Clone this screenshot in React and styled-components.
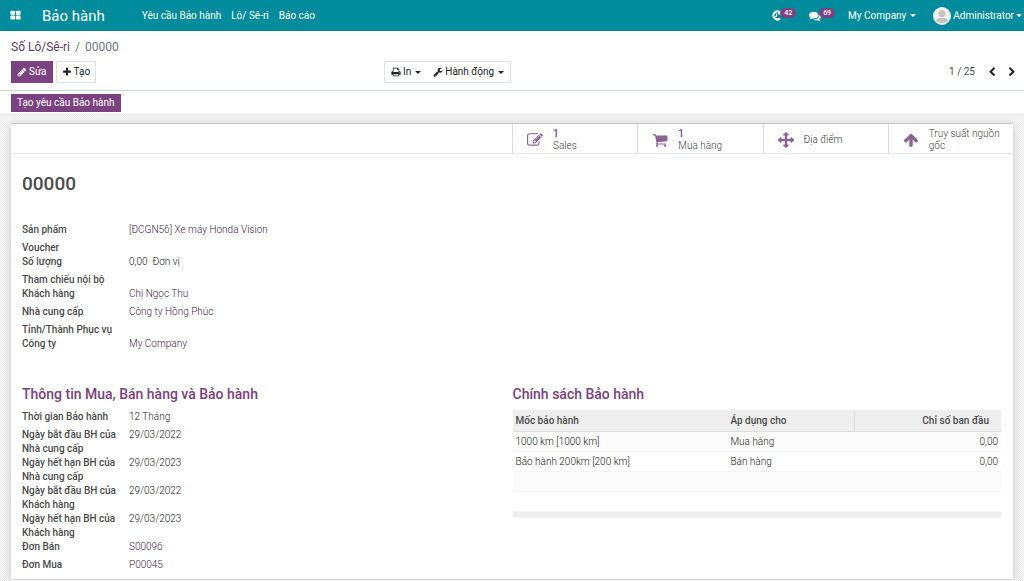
import React from "react";
import styled, { createGlobalStyle } from "styled-components";


const GlobalStyle = createGlobalStyle`
* {
  box-sizing: border-box;
}

body {
  margin: 0;
  font-family: Roboto, "Noto Sans", sans-serif;
  font-size: 10px;
  line-height: 14px;
  color: #4c4c4c;
  background-color: #eeeeee;
  background-image: conic-gradient(#f8f8f8 25%, #ececec 0 50%, #f8f8f8 0 75%, #ececec 0);
  background-size: 2px 2px;
}

a {
  color: #5f3a66;
  text-decoration: none;
}

button {
  font: inherit;
  cursor: pointer;
}
`

const paths = {
  grid: "M832 1024v384q0 52-38 90t-90 38h-512q-52 0-90-38t-38-90v-384q0-52 38-90t90-38h512q52 0 90 38t38 90zm0-768v384q0 52-38 90t-90 38h-512q-52 0-90-38t-38-90v-384q0-52 38-90t90-38h512q52 0 90 38t38 90zm896 768v384q0 52-38 90t-90 38h-512q-52 0-90-38t-38-90v-384q0-52 38-90t90-38h512q52 0 90 38t38 90zm0-768v384q0 52-38 90t-90 38h-512q-52 0-90-38t-38-90v-384q0-52 38-90t90-38h512q52 0 90 38t38 90z",
  pencil: "M491 1536l91-91-235-235-91 91v107h128v128h107zm523-928q0-22-22-22-10 0-17 7l-542 542q-7 7-7 17 0 22 22 22 10 0 17-7l542-542q7-7 7-17zm-54-192l416 416-832 832h-416v-416zm683 96q0 53-37 90l-166 166-416-416 166-165q36-38 90-38 53 0 91 38l235 234q37 39 37 91z",
  plus: "M1600 736v192q0 40-28 68t-68 28h-416v416q0 40-28 68t-68 28h-192q-40 0-68-28t-28-68v-416h-416q-40 0-68-28t-28-68v-192q0-40 28-68t68-28h416v-416q0-40 28-68t68-28h192q40 0 68 28t28 68v416h416q40 0 68 28t28 68z",
  print: "M448 1536h896v-256h-896v256zm0-640h896v-384h-160q-40 0-68-28t-28-68v-160h-640v640zm1152 64q0-26-19-45t-45-19-45 19-19 45 19 45 45 19 45-19 19-45zm128 0v416q0 13-9.5 22.5t-22.5 9.5h-224v160q0 40-28 68t-68 28h-960q-40 0-68-28t-28-68v-160h-224q-13 0-22.5-9.5t-9.5-22.5v-416q0-79 56.5-135.5t135.5-56.5h64v-544q0-40 28-68t68-28h672q40 0 88 20t76 48l152 152q28 28 48 76t20 88v256h64q79 0 135.5 56.5t56.5 135.5z",
  wrench: "M448 1472q0-26-19-45t-45-19-45 19-19 45 19 45 45 19 45-19 19-45zm644-420l-682 682q-37 37-90 37-52 0-91-37l-106-108q-38-36-38-90 0-53 38-91l681-681q39 98 114.5 173.5t173.5 114.5zm634-435q0 39-23 106-47 134-164.5 217.5t-258.5 83.5q-185 0-316.5-131.5t-131.5-316.5 131.5-316.5 316.5-131.5q58 0 121.5 16.5t107.5 46.5q16 11 16 28t-16 28l-293 169v224l193 107q5-3 79-48.5t135.5-81 70.5-35.5q15 0 23.5 10t8.5 25z",
  edit: "M888 1184l116-116-152-152-116 116v56h96v96h56zm440-720q-16-16-33 1l-350 350q-17 17-1 33t33-1l350-350q17-17 1-33zm80 594v190q0 119-84.5 203.5t-203.5 84.5h-832q-119 0-203.5-84.5t-84.5-203.5v-832q0-119 84.5-203.5t203.5-84.5h832q63 0 117 25 15 7 18 23 3 17-9 29l-49 49q-14 14-32 8-23-6-45-6h-832q-66 0-113 47t-47 113v832q0 66 47 113t113 47h832q66 0 113-47t47-113v-126q0-13 9-22l64-64q15-15 35-7t20 29zm-96-738l288 288-672 672h-288v-288zm444 132l-92 92-288-288 92-92q28-28 68-28t68 28l152 152q28 28 28 68t-28 68z",
  cart: "M704 1536q0 52-38 90t-90 38-90-38-38-90 38-90 90-38 90 38 38 90zm896 0q0 52-38 90t-90 38-90-38-38-90 38-90 90-38 90 38 38 90zm128-1088v512q0 24-16.5 42.5t-40.5 21.5l-1044 122q13 60 13 70 0 16-24 64h920q26 0 45 19t19 45-19 45-45 19h-1024q-26 0-45-19t-19-45q0-11 8-31.5t16-36 21.5-40 15.5-29.5l-177-823h-204q-26 0-45-19t-19-45 19-45 45-19h256q16 0 28.5 6.5t19.5 15.5 13 24.5 8 26 5.5 29.5 4.5 26h1201q26 0 45 19t19 45z",
  arrows: "M1792 896q0 26-19 45l-256 256q-19 19-45 19t-45-19-19-45v-128h-384v384h128q26 0 45 19t19 45-19 45l-256 256q-19 19-45 19t-45-19l-256-256q-19-19-19-45t19-45 45-19h128v-384h-384v128q0 26-19 45t-45 19-45-19l-256-256q-19-19-19-45t19-45l256-256q19-19 45-19t45 19 19 45v128h384v-384h-128q-26 0-45-19t-19-45 19-45l256-256q19-19 45-19t45 19l256 256q19 19 19 45t-19 45-45 19h-128v384h384v-128q0-26 19-45t45-19 45 19l256 256q19 19 19 45z",
  up: "M1675 971q0 51-37 90l-75 75q-38 38-91 38-54 0-90-38l-294-293v704q0 52-37.5 84.5t-90.5 32.5h-128q-53 0-90.5-32.5t-37.5-84.5v-704l-294 293q-36 38-90 38t-90-38l-75-75q-38-38-38-90 0-53 38-91l651-651q35-37 90-37 54 0 91 37l651 651q37 39 37 91z",
  comments: "M1408 768q0 139-94 257t-256.5 186.5-353.5 68.5q-86 0-176-16-124 88-278 128-36 9-86 16h-3q-11 0-20.5-8t-11.5-21q-1-3-1-6.5t.5-6.5 2-6l2.5-5 3.5-5.5 4-5 4.5-5 4-4.5q5-6 23-25t26-29.5 22.5-29 25-38.5 20.5-44q-124-72-195-177t-71-224q0-139 94-257t256.5-186.5 353.5-68.5 353.5 68.5 256.5 186.5 94 257zm384 256q0 120-71 224.5t-195 176.5q10 24 20.5 44t25 38.5 22.5 29 26 29.5 23 25q1 1 4 4.5t4.5 5 4 5 3.5 5.5l2.5 5 2 6 .5 6.5-1 6.5q-3 14-13 22t-22 7q-50-7-86-16-154-40-278-128-90 16-176 16-271 0-472-132 58 4 88 4 161 0 309-45t264-129q125-92 192-212t67-254q0-77-23-152 129 71 204 178t75 230z",
  left: "M1427 301l-531 531 531 531q19 19 19 45t-19 45l-166 166q-19 19-45 19t-45-19l-742-742q-19-19-19-45t19-45l742-742q19-19 45-19t45 19l166 166q19 19 19 45t-19 45z",
  right: "M1363 877l-742 742q-19 19-45 19t-45-19l-166-166q-19-19-19-45t19-45l531-531-531-531q-19-19-19-45t19-45l166-166q19-19 45-19t45 19l742 742q19 19 19 45t-19 45z",
}

const Svg = styled.svg`
  display: block;
  flex: none;
  width: ${(props) => props.$size}px;
  height: ${(props) => props.$size}px;
  fill: currentColor;
`

const Icon = ({ name, size = 11 }) => (
  <Svg $size={size} viewBox="0 0 1792 1792" aria-hidden="true">
    <path d={paths[name]} />
  </Svg>
)

const Caret = styled.span`
  border: 3px solid transparent;
  border-top-color: currentColor;
  border-bottom: 0;
`

const Navbar = styled.nav`
  display: flex;
  align-items: center;
  height: 31px;
  padding: 0 2px 0 10px;
  background-color: #008c9c;
  box-shadow: inset 0 -1px #007f8e;
  color: white;

  a {
    color: white;
  }
`

const NavButton = styled.button`
  display: flex;
  align-items: center;
  gap: ${(props) => props.$gap || 0}px;
  padding: 0;
  border: none;
  background: none;
  color: white;
`

const Brand = styled.a`
  margin-left: 21px;
  font-size: 15px;
  line-height: 20px;
`

const Links = styled.div`
  display: flex;
  flex: 1;
  gap: 10px;
  margin-left: 37px;
`

const Systray = styled.div`
  display: flex;
  align-items: center;

  > * + * {
    margin-left: 13px;
  }

  > :last-child {
    margin-left: 17px;
  }
`

const Badge = styled.span`
  height: 10px;
  margin: -5px 0 0 -2px;
  padding: 0 4px;
  border-radius: 5px;
  background-color: #7c4180;
  font-size: 7px;
  font-weight: 500;
  line-height: 10px;
`

const ControlPanel = styled.header`
  padding: 8px 0 7px;
  background-color: white;
  border-bottom: 1px solid #cfd4d4;
`

const Breadcrumb = styled.div`
  display: flex;
  gap: 5px;
  padding: 0 11px;
  font-size: 12px;
  line-height: 16px;
  color: #6c757d;
`

const Toolbar = styled.div`
  display: grid;
  grid-template-columns: 3fr 5fr;
  align-items: center;
  margin-top: 6px;
`

const MainButtons = styled.div`
  display: flex;
  gap: 3px;
  padding-left: 11px;
`

const Button = styled.button`
  display: flex;
  align-items: center;
  gap: 2px;
  height: 22px;
  padding: 0 5px;
  border: 1px solid ${(props) => (props.$primary ? "#7c4180" : "#dee2e6")};
  background-color: ${(props) => (props.$primary ? "#7c4180" : "white")};
  color: ${(props) => (props.$primary ? "white" : "#212529")};
`

const ToolbarRight = styled.div`
  display: flex;
  justify-content: space-between;
  align-items: center;
`

const Menus = styled.div`
  display: flex;
  border: 1px solid #dee2e6;

  button {
    height: 20px;
    padding: 0 6px;
    border: none;
  }

  ${Caret} {
    margin-left: 2px;
  }
`

const Pager = styled.div`
  display: flex;
  align-items: center;
  padding-right: 2px;

  span {
    margin-right: 7px;
  }

  button {
    padding: 0 5px;
    border: none;
    background: none;
    color: #212529;
  }
`

const StatusBar = styled.div`
  padding: 3px 11px 2px;
  background-color: white;
  border-bottom: 1px solid #e6e6e6;

  button {
    height: 18px;
  }
`

const Sheet = styled.main`
  margin: 8px 11px 1px;
  padding-bottom: 3px;
  background-color: white;
  border-top: 1px solid #c8c8c8;
  box-shadow: 0 2px 8px rgba(0, 0, 0, 0.18);
`

const ButtonBox = styled.div`
  display: grid;
  grid-template-columns: 4fr 1fr 1fr 1fr 1fr;
  height: 30px;
  border-bottom: 1px solid #e9e9e9;
`

const StatButton = styled.button`
  display: flex;
  align-items: center;
  gap: 10px;
  padding: 2px 12px 0 14px;
  border: none;
  border-left: 1px solid #dddddd;
  background: none;
  color: #444444;
  font-weight: 300;
  line-height: 12px;
  text-align: left;

  svg {
    color: #8f6294;
  }

  b {
    display: block;
    color: #7c4180;
    font-weight: 500;
  }
`

const Content = styled.div`
  padding: 0 12px 0 11px;
`

const Title = styled.h1`
  margin: 18px 0 27px;
  font-size: 19px;
  font-weight: 500;
  line-height: 24px;
`

const Columns = styled.div`
  display: grid;
  grid-template-columns: 1fr 1fr;
  gap: 2px;
  margin-top: 29px;
`

const GroupTitle = styled.h2`
  margin: 0 0 6px;
  color: #7c4180;
  font-size: 14px;
  font-weight: 500;
  line-height: 20px;
`

const Fields = styled.dl`
  margin: 0;
`

const FieldRow = styled.div`
  display: grid;
  grid-template-columns: 98px 1fr;
  column-gap: 9px;

  dt {
    font-weight: 500;
  }

  dd {
    margin: 0;
    padding-bottom: ${(props) => (props.$empty ? 0 : 4)}px;
    color: #222222;
    font-weight: 300;
  }

  a {
    color: #481a50;
  }
`

const Table = styled.table`
  width: 100%;
  border-collapse: collapse;
  table-layout: fixed;

  th, td {
    height: 20px;
    padding: 3px 3px 2px;
    text-align: left;
    border-bottom: 1px solid #f4f4f4;
  }

  td {
    color: #222222;
    font-weight: 300;
  }

  th {
    height: 21px;
    background-color: #eeeeee;
    border-bottom-color: #dddddd;
    font-weight: 500;
  }

  th:last-child {
    padding-right: 12px;
    border-left: 1px solid #dddddd;
  }

  th:last-child, td:last-child {
    text-align: right;
  }

  tbody tr:nth-child(odd) {
    background-color: #fcfcfc;
  }

  tfoot td {
    height: 6px;
    padding: 0;
    background-color: #eeeeee;
    border-top: 1px solid #dddddd;
  }
`

const Col = styled.col`
  width: ${(props) => props.$width};
`

const product = [
  { label: "Sản phẩm", value: "[ĐCGN56] Xe máy Honda Vision", link: true },
  { label: "Voucher" },
  { label: "Số lượng", value: "0,00\u00a0 Đơn vị" },
  { label: "Tham chiếu nội bộ" },
  { label: "Khách hàng", value: "Chị Ngọc Thu", link: true },
  { label: "Nhà cung cấp", value: "Công ty Hồng Phúc", link: true },
  { label: "Tỉnh/Thành Phục vụ" },
  { label: "Công ty", value: "My Company", link: true },
]

const warranty = [
  { label: "Thời gian Bảo hành", value: "12 Tháng" },
  { label: "Ngày bắt đầu BH của Nhà cung cấp", value: "29/03/2022" },
  { label: "Ngày hết hạn BH của Nhà cung cấp", value: "29/03/2023" },
  { label: "Ngày bắt đầu BH của Khách hàng", value: "29/03/2022" },
  { label: "Ngày hết hạn BH của Khách hàng", value: "29/03/2023" },
  { label: "Đơn Bán", value: "S00096", link: true },
  { label: "Đơn Mua", value: "P00045", link: true },
]

const policies = [
  ["1000 km [1000 km]", "Mua hàng", "0,00"],
  ["Bảo hành 200km [200 km]", "Bán hàng", "0,00"],
  ["", "", ""],
  ["", "", ""],
]

const stats = [
  { icon: "edit", count: 1, label: "Sales" },
  { icon: "cart", count: 1, label: "Mua hàng" },
  { icon: "arrows", label: "Địa điểm" },
  { icon: "up", label: "Truy suất nguồn gốc" },
]

const FieldList = ({ fields }) => (
  <Fields>
    {fields.map((field) => (
      <FieldRow key={field.label} $empty={!field.value}>
        <dt>{field.label}</dt>
        <dd>{field.link ? <a href="#">{field.value}</a> : field.value}</dd>
      </FieldRow>
    ))}
  </Fields>
)

const ActivityIcon = () => (
  <Svg $size={11} viewBox="0 0 22 22" aria-hidden="true">
    <path d="M17 4A8 8 0 1 0 18 17" fill="none" stroke="currentColor" strokeWidth="4" />
    <path d="M13 8L20 1V10Z" />
    <path d="M11 7V13H8" fill="none" stroke="currentColor" strokeWidth="2" />
  </Svg>
)

const Avatar = () => (
  <Svg $size={18} viewBox="0 0 36 36" aria-hidden="true">
    <circle cx="18" cy="18" r="18" fill="#f1f1f1" />
    <circle cx="18" cy="13" r="7" fill="#c3c3c3" />
    <path d="M6 29Q7 22 14 22H22Q29 22 30 29Q25 32 18 32T6 29Z" fill="#c3c3c3" />
  </Svg>
)

export default function App() {
  return (
    <>
      <GlobalStyle />
      <Navbar>
        <NavButton aria-label="Ứng dụng"><Icon name="grid" /></NavButton>
        <Brand href="#">Bảo hành</Brand>
        <Links>
          <a href="#">Yêu cầu Bảo hành</a>
          <a href="#">Lô/ Sê-ri</a>
          <a href="#">Báo cáo</a>
        </Links>
        <Systray>
          <NavButton><ActivityIcon /><Badge>42</Badge></NavButton>
          <NavButton><Icon name="comments" size={12} /><Badge>69</Badge></NavButton>
          <NavButton $gap={4}>My Company <Caret /></NavButton>
          <NavButton $gap={2}><Avatar />Administrator <Caret /></NavButton>
        </Systray>
      </Navbar>

      <ControlPanel>
        <Breadcrumb>
          <a href="#">Số Lô/Sê-ri</a>
          <span>/</span>
          <span>00000</span>
        </Breadcrumb>
        <Toolbar>
          <MainButtons>
            <Button $primary><Icon name="pencil" size={10} />Sửa</Button>
            <Button><Icon name="plus" size={10} />Tạo</Button>
          </MainButtons>
          <ToolbarRight>
            <Menus>
              <Button><Icon name="print" size={10} />In <Caret /></Button>
              <Button><Icon name="wrench" size={10} />Hành động <Caret /></Button>
            </Menus>
            <Pager>
              <span>1 / 25</span>
              <button aria-label="Trước"><Icon name="left" size={10} /></button>
              <button aria-label="Sau"><Icon name="right" size={10} /></button>
            </Pager>
          </ToolbarRight>
        </Toolbar>
      </ControlPanel>

      <StatusBar>
        <Button $primary>Tạo yêu cầu Bảo hành</Button>
      </StatusBar>

      <Sheet>
        <ButtonBox>
          <span />
          {stats.map((stat) => (
            <StatButton key={stat.label}>
              <Icon name={stat.icon} size={16} />
              <span>
                {stat.count && <b>{stat.count}</b>}
                {stat.label}
              </span>
            </StatButton>
          ))}
        </ButtonBox>
        <Content>
          <Title>00000</Title>
          <FieldList fields={product} />
          <Columns>
            <section>
              <GroupTitle>Thông tin Mua, Bán hàng và Bảo hành</GroupTitle>
              <FieldList fields={warranty} />
            </section>
            <section>
              <GroupTitle>Chính sách Bảo hành</GroupTitle>
              <Table>
                <colgroup>
                  <Col $width="44%" />
                  <Col $width="26%" />
                  <Col $width="30%" />
                </colgroup>
                <thead>
                  <tr>
                    <th>Mốc bảo hành</th>
                    <th>Áp dụng cho</th>
                    <th>Chỉ số ban đầu</th>
                  </tr>
                </thead>
                <tbody>
                  {policies.map((row, i) => (
                    <tr key={i}>
                      {row.map((cell, j) => <td key={j}>{cell}</td>)}
                    </tr>
                  ))}
                </tbody>
                <tfoot>
                  <tr><td colSpan={3} /></tr>
                </tfoot>
              </Table>
            </section>
          </Columns>
        </Content>
      </Sheet>
    </>
  );
}
